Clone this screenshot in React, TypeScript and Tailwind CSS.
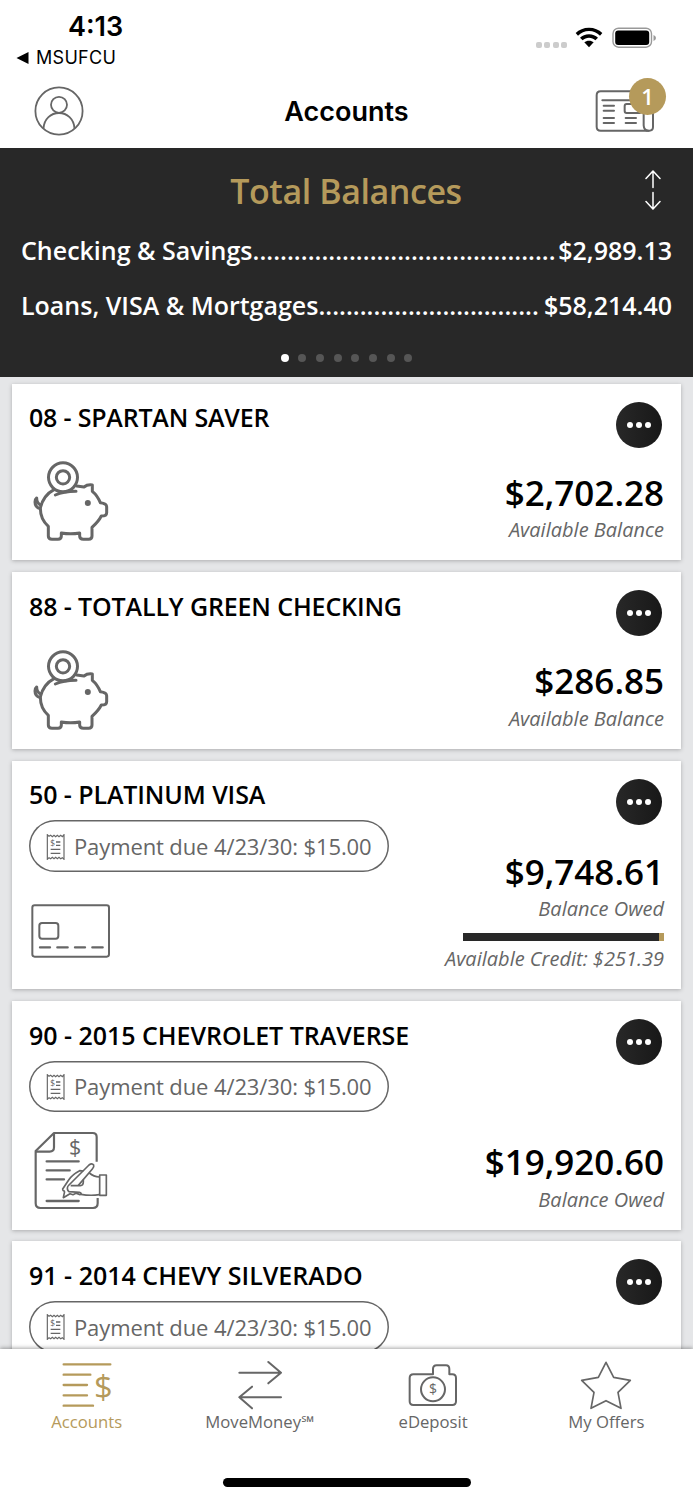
import type { ReactNode } from 'react';

type IconName = 'piggy' | 'card' | 'loan';

interface Account {
  id: string;
  name: string;
  tracking?: string;
  amount?: string;
  label?: string;
  icon?: IconName;
  payment?: string;
  credit?: { text: string; usedPct: number };
}

const ACCOUNTS: Account[] = [
  {
    id: '08',
    name: 'SPARTAN SAVER',
    tracking: 'tracking-[-0.200px]',
    amount: '$2,702.28',
    label: 'Available Balance',
    icon: 'piggy',
  },
  {
    id: '88',
    name: 'TOTALLY GREEN CHECKING',
    tracking: 'tracking-[-0.130px]',
    amount: '$286.85',
    label: 'Available Balance',
    icon: 'piggy',
  },
  {
    id: '50',
    name: 'PLATINUM VISA',
    tracking: 'tracking-[-0.100px]',
    amount: '$9,748.61',
    label: 'Balance Owed',
    icon: 'card',
    payment: 'Payment due 4/23/30: $15.00',
    credit: { text: 'Available Credit: $251.39', usedPct: 97.5 },
  },
  {
    id: '90',
    name: '2015 CHEVROLET TRAVERSE',
    tracking: 'tracking-[-0.030px]',
    amount: '$19,920.60',
    label: 'Balance Owed',
    icon: 'loan',
    payment: 'Payment due 4/23/30: $15.00',
  },
  {
    id: '91',
    name: '2014 CHEVY SILVERADO',
    payment: 'Payment due 4/23/30: $15.00',
  },
];

function PiggyIcon() {
  return (
    <svg
      className="h-[86px] w-[82px]"
      viewBox="87 249 246 258"
      fill="none"
      stroke="#666"
      strokeWidth="9"
      strokeLinecap="round"
      strokeLinejoin="round"
    >
      <circle cx="189" cy="304" r="43.5" />
      <circle cx="189" cy="304" r="20" />
      <path d="M166 357Q190 346 228 346" />
      <path d="M230 330L252 333Q262 325 277 327V346Q292 358 301 380Q320 382 320 392V410Q320 420 304 420Q296 436 276 454V480Q276 490 266 490H250Q239 490 239 480V471Q212 476 184 471V480Q184 490 174 490H156Q145 490 145 480V451Q121 430 121 396Q130 358 162 341" />
      <path d="M120 398Q105 393 105 378Q105 370 110 366Q110 382 122 387" />
      <circle cx="263.500" cy="381" r="9" fill="#666" stroke="none" />
    </svg>
  );
}

function CreditCardIcon() {
  return (
    <svg className="h-[86px] w-[82px]" viewBox="87 384 246 258" fill="none" stroke="#666" strokeWidth="6">
      <rect x="97" y="436" width="230" height="154" rx="7" />
      <rect x="118" y="489" width="57" height="47" rx="8" />
      <path
        d="M120 562H150M172 562H203M225 562H255M277 562H308"
        strokeWidth="7"
        strokeLinecap="round"
      />
    </svg>
  );
}

function LoanIcon() {
  return (
    <svg
      className="h-[86px] w-[82px]"
      viewBox="87 387 246 258"
      fill="none"
      stroke="#666"
      strokeWidth="6.500"
      strokeLinejoin="round"
    >
      <path d="M290 485V411Q290 399 278 399H162L107 453V610Q107 624 121 624H279Q293 624 293 610V594" />
      <path d="M162 399V442Q162 455 149 455H107" />
      <path d="M140 484H236M140 511H209M140 538H192M140 603H236" strokeLinecap="round" strokeWidth="7" />
      <text
        x="225"
        y="466"
        textAnchor="middle"
        fontSize="64"
        fill="#666"
        stroke="none"
        fontFamily="Open Sans, sans-serif"
      >
        $
      </text>
      <g strokeWidth="5">
        <rect x="299" y="525" width="20" height="61" />
        {/* back of the hand and thumb side of the wrist */}
        <path d="M298 531Q281 530 268 519M298 584Q270 588 243 583" />
        {/* pen */}
        <path d="M204 558L267 495Q276 488 281 495Q283 500 277 507L235 556" />
        {/* fingers */}
        <path d="M250 513L239 512Q216 524 206 540L188 567Q188 574 195 573M204 558Q199 568 207 575L238 577Q248 581 240 584L228 580L219 584L210 581L190 593L194 574" />
        <path d="M212 557H241Q250 556 250 545V539" />
      </g>
    </svg>
  );
}

const ACCOUNT_ICONS: Record<IconName, ReactNode> = {
  piggy: <PiggyIcon />,
  card: <CreditCardIcon />,
  loan: <LoanIcon />,
};

function ReceiptIcon() {
  return (
    <svg className="h-[26px] w-[19px] shrink-0" viewBox="0 0 57 78" fill="none" stroke="#666" strokeWidth="3.500">
      <path d="M4 76V2L9 7L14 4L19 8L24 4L29 8L34 4L39 8L44 4L49 8L54 2V76L49 71L44 74L39 70L34 74L29 70L24 74L19 70L14 74L9 71Z" />
      <path d="M30 24H43M30 34H43M14 46H43M14 58H43" strokeWidth="4" />
      <text x="20" y="37" textAnchor="middle" fontSize="25" fill="#666" stroke="none" fontFamily="Open Sans, sans-serif">
        $
      </text>
    </svg>
  );
}

function StatusBar() {
  return (
    <div className="flex h-[74px] justify-between bg-white font-['Inter',sans-serif] text-black">
      <div className="pt-[11px] pl-4">
        <div className="pl-[52px] text-[27px] leading-8 font-semibold">4:13</div>
        <div className="mt-1 flex items-center text-[18px] leading-[22px]">
          <svg className="mr-[7px] h-3 w-[13px]" viewBox="0 0 13 12">
            <path d="M0.500 6L12.500 0V12Z" fill="black" />
          </svg>
          <span className="tracking-[0.300px]">MSUFCU</span>
        </div>
      </div>
      <div className="flex pt-[27px] pr-9">
        <div className="mt-[15px] flex gap-[2.500px]">
          {[0, 1, 2, 3].map((i) => (
            <span key={i} className="h-1.5 w-1.5 rounded-[2px] bg-[#ccc]" />
          ))}
        </div>
        <svg className="mr-px ml-2 h-[22px] w-[28px]" viewBox="0 0 84 66" fill="black">
          <path d="M42 2C26 2 12 8 2 18L9 26C18 17 29 12 42 12S66 17 75 26L82 18C72 8 58 2 42 2Z" />
          <path d="M42 22C31 22 22 26 15 32L23 40C28 35 35 32 42 32S56 35 61 40L69 32C62 26 53 22 42 22Z" />
          <path d="M42 41C36 41 32 43 28 46L42 61L56 46C52 43 48 41 42 41Z" />
        </svg>
        <svg className="ml-2 h-[22px] w-[45px]" viewBox="0 0 45 22">
          <rect x="1" y="1.200" width="38.500" height="19" rx="5.500" fill="white" stroke="#999" strokeWidth="1.400" />
          <rect x="3.200" y="3.500" width="34" height="14.500" rx="3" fill="black" />
          <path d="M41.500 8Q44 9 44 11T41.500 14Z" fill="#999" />
        </svg>
      </div>
    </div>
  );
}

function Header() {
  return (
    <header className="flex h-[73.500px] items-center justify-between bg-white pr-[27px] pl-[34px]">
      <svg className="h-[50px] w-[50px]" viewBox="0 0 50 50" fill="none" stroke="#666" strokeWidth="1.800">
        <circle cx="25" cy="25" r="23.600" />
        <circle cx="25" cy="18.800" r="8" />
        <path d="M9.500 42.500C10 33 17 27 25 27S40 33 40.500 42.500" />
      </svg>
      <h1 className="pt-[3px] pl-3.5 font-['Inter',sans-serif] text-[27px] leading-8 font-semibold">Accounts</h1>
      <div className="relative mb-3 h-[54px] w-[71px]">
        <svg className="h-[54px] w-[71px]" viewBox="0 0 213 162" fill="none" stroke="#666" strokeWidth="6" strokeLinecap="round">
          <path d="M152 40H17Q5 40 5 52V146Q5 158 17 158H163Q174 158 174 147V100" />
          <path d="M146 100V142Q147 158 160 158" />
          <path d="M22 67H110M26 83H57M26 98H57M26 120H57M26 135H57M92 120H123M92 135H123" />
          <rect x="89" y="78" width="50" height="27" rx="6" />
        </svg>
        <span className="absolute top-0 right-0 flex h-[37px] w-[37px] items-center justify-center rounded-full bg-[#b59a5b] font-['Open_Sans',sans-serif] text-[22px] font-semibold text-white">
          1
        </span>
      </div>
    </header>
  );
}

function TotalBalances() {
  return (
    <section className="h-[229.500px] bg-[#282828] px-[21px] font-semibold text-white">
      <div className="flex h-[84.500px] items-center">
        <h2 className="flex-1 pt-0.5 pl-[26px] text-center text-[34px] leading-[46px] tracking-[-0.420px] text-[#b59a5b]">
          Total Balances
        </h2>
        <svg className="mt-px mr-[11px] h-10 w-4" viewBox="0 0 16 40" fill="none" stroke="white" strokeWidth="1.500" strokeLinecap="round">
          <path d="M8 17.500V1M1 8.500L8 1L15 8.500M8 22.500V39M1 31.500L8 39L15 31.500" />
        </svg>
      </div>
      <div className="flex h-[38px] items-center text-[25px] whitespace-nowrap">
        <span>Checking &amp; Savings</span>
        <span className="tracking-[0.040px]">............................................</span>
        <span className="ml-auto">$2,989.13</span>
      </div>
      <div className="mt-[17px] flex h-[38px] items-center text-[25px] whitespace-nowrap">
        <span>Loans, VISA &amp; Mortgages</span>
        <span className="tracking-[0.040px]">................................</span>
        <span className="ml-auto">$58,214.40</span>
      </div>
      <div className="mt-[29px] flex justify-center gap-[9.700px]">
        {[0, 1, 2, 3, 4, 5, 6, 7].map((i) => (
          <span key={i} className={`h-2 w-2 rounded-full ${i === 0 ? 'bg-white' : 'bg-[#565656]'}`} />
        ))}
      </div>
    </section>
  );
}

function AccountCard({ account }: { account: Account }) {
  const { id, name, tracking = '', amount, label, icon, payment, credit } = account;
  return (
    <article
      className={`flex shrink-0 justify-between bg-white pr-[17px] pl-[17px] shadow-[0_1px_4px_rgba(0,0,0,0.25)] ${
        payment ? 'h-[228.500px]' : 'h-[176.600px]'
      }`}
    >
      <div className="flex flex-col items-start pt-[16.600px] pb-[15px]">
        <h3 className={`text-[25px] leading-[34px] font-semibold whitespace-nowrap ${tracking}`}>
          {id} - {name}
        </h3>
        {payment && (
          <div className="mt-[9px] flex h-[51.500px] w-[360px] shrink-0 items-center rounded-full pt-px pl-[17px] text-[22px] whitespace-nowrap text-[#666] shadow-[inset_0_0_0_1.500px_#666]">
            <ReceiptIcon />
            <span className="ml-[9px] tracking-[-0.110px]">{payment}</span>
          </div>
        )}
        {icon && <div className="mt-auto">{ACCOUNT_ICONS[icon]}</div>}
      </div>
      <div className="flex flex-col items-end pt-[18px] pb-[16px]">
        <button className="mr-[2px] flex h-[46px] w-[46px] items-center justify-center gap-[3px] rounded-full bg-linear-to-r from-[#282828] to-[#181818]">
          {[0, 1, 2].map((i) => (
            <span key={i} className="h-1.5 w-1.5 rounded-full bg-white" />
          ))}
        </button>
        {amount && <div className="mt-auto mb-[0.600px] text-[35px] leading-[46px] font-semibold">{amount}</div>}
        {label && <div className="text-[20px] leading-[28px] text-[#666] italic">{label}</div>}
        {credit && (
          <>
            <div className="mt-[10px] h-2 w-[201px] bg-[#b59a5b]">
              <div className="h-full bg-[#282828]" style={{ width: `${credit.usedPct}%` }} />
            </div>
            <div className="mt-[4px] text-[20px] leading-[28px] whitespace-nowrap text-[#666] italic">{credit.text}</div>
          </>
        )}
      </div>
    </article>
  );
}

interface TabProps {
  label: ReactNode;
  active?: boolean;
  children: ReactNode;
}

function Tab({ label, active, children }: TabProps) {
  return (
    <button className={`flex flex-1 flex-col items-center ${active ? 'text-[#b59a5b]' : 'text-[#666]'}`}>
      <svg className="h-[52px] w-[52px]" viewBox="0 0 156 156" fill="none" stroke="currentColor" strokeWidth="6" strokeLinecap="round" strokeLinejoin="round">
        {children}
      </svg>
      <span className="-mt-[2px] text-[16.700px] leading-6 whitespace-nowrap">{label}</span>
    </button>
  );
}

function TabBar() {
  return (
    <nav className="relative flex h-[151px] shrink-0 flex-col items-center bg-white shadow-[0_-1px_4px_rgba(0,0,0,0.35)]">
      <div className="flex w-full pt-[11px]">
        <Tab active label="Accounts">
          <path d="M8 13H148M8 44H88M8 75H78M8 106H78M8 137H96" strokeWidth="7" />
          <text x="127" y="117" textAnchor="middle" fontSize="98" fill="currentColor" stroke="none">
            $
          </text>
        </Tab>
        <Tab label="MoveMoney℠">
          <path d="M16 38H141M103 6L141 38L103 70M141 112H16M54 80L16 112L54 145" />
        </Tab>
        <Tab label="eDeposit">
          <path d="M78 43V27Q78 16 89 16H117Q127 16 127 27V43H136Q147 43 147 54V124Q147 135 136 135H19Q8 135 8 124V54Q8 43 19 43Z" />
          <circle cx="78" cy="88" r="36" />
          <text x="78" y="103" textAnchor="middle" fontSize="42" fill="currentColor" stroke="none">
            $
          </text>
        </Tab>
        <Tab label="My Offers">
          <path d="M78 7L101 52L151 61L114 97L123 145L78 122L33 145L42 97L5 61L55 52Z" strokeWidth="5" />
        </Tab>
      </div>
      <div className="mt-auto mb-[13.500px] h-[9px] w-[248px] rounded-full bg-black" />
    </nav>
  );
}

export default function App() {
  return (
    <div className="flex h-[1500px] w-[693px] flex-col overflow-hidden bg-[#e5e6e8] font-['Open_Sans',sans-serif] text-black">
      <StatusBar />
      <Header />
      <TotalBalances />
      <main className="flex min-h-0 flex-1 flex-col gap-[11.900px] overflow-hidden px-3 pt-[6.700px]">
        {ACCOUNTS.map((account) => (
          <AccountCard key={account.id} account={account} />
        ))}
      </main>
      <TabBar />
    </div>
  );
}
